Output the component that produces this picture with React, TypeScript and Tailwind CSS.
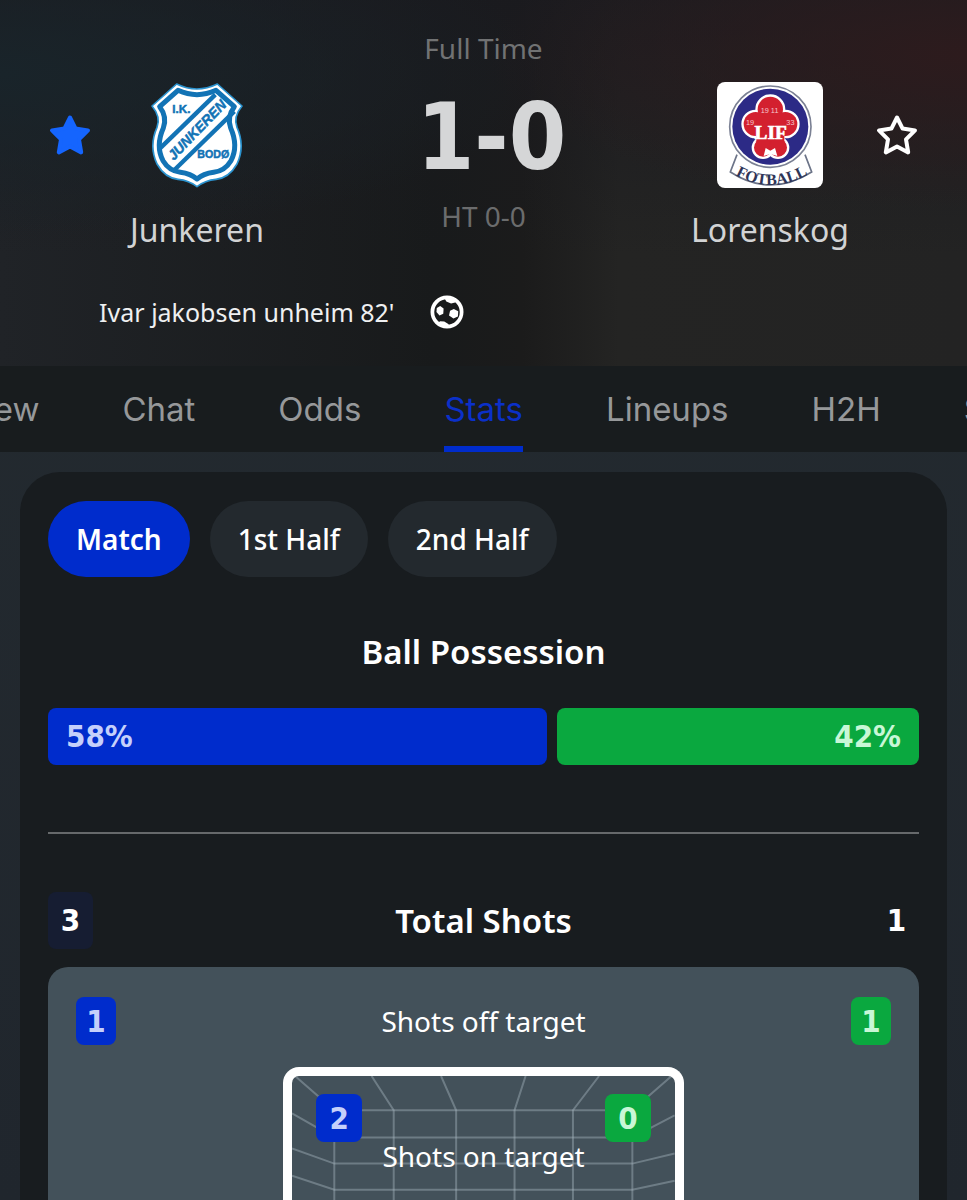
import React, { useState } from 'react';

const TABS = ['Preview', 'Chat', 'Odds', 'Stats', 'Lineups', 'H2H', 'Squad'];
const PERIODS = ['Match', '1st Half', '2nd Half'];

const possession = { home: 58, away: 42 };

const StarIcon = ({ filled }: { filled?: boolean }) => (
  <svg viewBox="0 0 42 42" className="size-[42px]" aria-hidden="true">
    <path
      d="M21 3.5 26.6 14.6 39 16.4 30 25.3 32.2 38.4 21 32.4 9.8 38.4 12 25.3 3 16.4 15.4 14.6Z"
      fill={filled ? '#1565fe' : 'none'}
      stroke={filled ? '#1565fe' : '#ffffff'}
      strokeWidth="4"
      strokeLinejoin="round"
    />
  </svg>
);

const BallIcon = () => (
  <svg viewBox="0 0 100 100" className="size-[34px]" aria-hidden="true">
    <circle cx="50" cy="50" r="43" fill="none" stroke="#fff" strokeWidth="11" />
    <g fill="#fff">
      <path d="M30 32 40 40 39 55 28 60 19 50 20 38Z" />
      <path d="M70 41 83 48 82 63 69 69 56 60 59 46Z" />
      <path d="M42 8 78 14 74 22 62 25 48 19Z" />
      <path d="M22 82 30 77 42 78 55 86 52 94 34 92Z" />
    </g>
  </svg>
);

const JunkerenCrest = () => (
  <svg viewBox="0 12 312 318" className="h-[106px] w-[104px]" role="img" aria-label="Junkeren crest">
    <path
      d="M95 18Q155 48 217 18L291 84Q264 116 276 148Q301 204 276 258Q252 300 213 304Q180 307 156 326Q132 307 99 304Q60 300 36 258Q11 204 36 148Q48 116 21 84Z"
      fill="#fff"
      stroke="#2b93cf"
      strokeWidth="5"
      strokeLinejoin="round"
    />
    <path
      d="M99 37Q156 63 213 37L268 86Q245 116 257 150Q281 204 258 248Q240 278 206 283Q175 287 156 303Q137 287 106 283Q72 278 54 248Q31 204 55 150Q67 116 44 86Z"
      fill="#fff"
      stroke="#1273b5"
      strokeWidth="15"
      strokeLinejoin="round"
    />
    <g stroke="#1273b5" strokeWidth="13">
      <path d="M45 211 211 50" />
      <path d="M88 276 268 100" />
    </g>
    <g fill="#1273b5" stroke="#1273b5" strokeWidth="1.5" fontFamily="'Liberation Sans', sans-serif" fontWeight="700">
      <text x="82" y="106" fontSize="35">I.K.</text>
      <text x="157" y="241" fontSize="32">BODØ</text>
      <text transform="translate(86 249) rotate(-46)" fontSize="42" fontStyle="italic">JUNKEREN</text>
    </g>
  </svg>
);

const LorenskogCrest = () => (
  <svg viewBox="14 14 318 318" className="size-[106px] rounded-lg bg-white" role="img" aria-label="Lorenskog crest">
    <path d="M74 232 54 284Q174 362 298 284L278 232" fill="#fff" stroke="#6c7488" strokeWidth="5" />
    <circle cx="174" cy="148" r="122" fill="#fff" stroke="#7b8194" strokeWidth="5" />
    <circle cx="174" cy="148" r="114" fill="#2c2a86" />
    <g fill="#d3202f" stroke="#fff" strokeWidth="12">
      <circle cx="174" cy="96" r="39" />
      <circle cx="130" cy="140" r="37" />
      <circle cx="219" cy="140" r="37" />
      <circle cx="152" cy="211" r="28" />
      <circle cx="197" cy="211" r="28" />
    </g>
    <g fill="#d3202f">
      <circle cx="174" cy="96" r="38" />
      <circle cx="130" cy="140" r="36" />
      <circle cx="219" cy="140" r="36" />
      <path d="M132 120H216V210H132Z" />
      <circle cx="152" cy="211" r="27" />
      <circle cx="197" cy="211" r="27" />
    </g>
    <path d="M154 236 160 212 174 220 188 212 195 236 174 230Z" fill="#fff" />
    <text
      x="175"
      y="186"
      textAnchor="middle"
      fill="#fff"
      stroke="#fff"
      strokeWidth="2"
      fontFamily="'Liberation Serif', serif"
      fontWeight="700"
      fontSize="58"
    >
      LIF
    </text>
    <g fill="#f3c6cc" fontFamily="'Liberation Sans', sans-serif" fontSize="22">
      <text x="145" y="106">19 11</text>
      <text x="101" y="142">19</text>
      <text x="222" y="142">33</text>
    </g>
    <path id="banner-arc" d="M64 291Q174 356 292 289" fill="none" />
    <text fill="#2f3557" fontFamily="'Liberation Serif', serif" fontWeight="700" fontSize="48">
      <textPath href="#banner-arc" startOffset="50%" textAnchor="middle">FOTBALL</textPath>
    </text>
  </svg>
);

const GoalNet = () => (
  <svg viewBox="0 0 380 240" className="absolute inset-x-0 top-0 w-full" aria-hidden="true">
    <g fill="none" stroke="#a9b8c1" strokeOpacity="0.42" strokeWidth="2">
      <path d="M3 0 42 34V240M79 0 101 34V240M148 0 163 34V240M232 0 221 34V240M305 0 279 34V240M377 0 338 34V240" />
      <path d="M42 34H338" />
      <path d="M0 37 42 61H338L380 39" />
      <path d="M0 72 42 87H338L380 77" />
      <path d="M0 99 42 113H338L380 104" />
      <path d="M0 130 42 139H338L380 132" />
      <path d="M0 160 42 165H338L380 161" />
    </g>
  </svg>
);

interface BadgeProps {
  value: number;
  side: 'home' | 'away';
  wide?: boolean;
}

const Badge: React.FC<BadgeProps> = ({ value, side, wide }) => (
  <span
    className={`flex h-12 items-center justify-center rounded-lg font-['DejaVu_Sans_Condensed','DejaVu_Sans',sans-serif] text-[31px] font-bold ${wide ? 'w-[46px]' : 'w-10'} ${side === 'home' ? 'bg-[#002ccc] text-[#c5d0fb]' : 'bg-[#0aa83f] text-[#c8f7d6]'}`}
  >
    {value}
  </span>
);

interface TeamProps {
  name: string;
  crest: React.ReactNode;
}

const Team: React.FC<TeamProps> = ({ name, crest }) => (
  <div className="flex flex-1 flex-col items-center pt-[82px]">
    {crest}
    <h2 className="mt-[22px] text-[32px] leading-10 text-[#d2d3d4]">{name}</h2>
  </div>
);

export default function App() {
  const [tab, setTab] = useState('Stats');
  const [period, setPeriod] = useState('Match');

  return (
    <div className="flex h-screen flex-col overflow-hidden bg-linear-to-b from-[#242b30] to-[#20262d] font-['Noto_Sans',sans-serif] text-white">
      <header className="shrink-0 bg-[#1a1b1c] bg-[radial-gradient(ellipse_at_100%_15%,#2d1b1d_0%,transparent_35%),radial-gradient(ellipse_at_0%_20%,#19242a_0%,transparent_40%),linear-gradient(to_bottom,rgba(26,26,31,0.8)_0%,transparent_70%),linear-gradient(90deg,#202327_0%,#181a1b_45%,#1b1b1b_54%,#242423_64%,#232323_100%)] pb-[34px]">
        <div className="grid grid-cols-[254px_1fr_254px] px-[49px]">
          <div className="flex items-start">
            <button className="mt-[114px]" aria-label="Unfollow Junkeren">
              <StarIcon filled />
            </button>
            <Team name="Junkeren" crest={<JunkerenCrest />} />
          </div>

          <div className="flex flex-col items-center pt-7">
            <p className="text-[28px] leading-10 text-[#717273]">Full Time</p>
            <p className="pl-4 font-['DejaVu_Sans_Condensed','DejaVu_Sans',sans-serif] text-[92px] leading-[140px] font-bold text-[#d5d6d7]">
              1-0
            </p>
            <p className="text-[28px] leading-4 text-[#6b6c6d]">HT 0-0</p>
          </div>

          <div className="flex items-start">
            <Team name="Lorenskog" crest={<LorenskogCrest />} />
            <button className="mt-[114px]" aria-label="Follow Lorenskog">
              <StarIcon />
            </button>
          </div>
        </div>

        <div className="mt-[42px] flex w-1/2 items-center justify-end gap-[35px] pr-5">
          <p className="text-[25px] leading-10 text-[#eff0f1]">Ivar jakobsen unheim 82'</p>
          <BallIcon />
        </div>
      </header>

      <nav className="flex h-[86px] shrink-0 justify-center gap-[83px] overflow-hidden bg-[#181c1e] pl-3 font-['Inter',sans-serif] text-[33px]">
        {TABS.map(t => (
          <button
            key={t}
            onClick={() => setTab(t)}
            className={`shrink-0 border-b-[6px] pt-2 ${t === tab ? 'border-[#002ccc] text-[#0b30c9]' : 'border-transparent text-[#96989a]'}`}
          >
            {t}
          </button>
        ))}
      </nav>

      <main className="mx-5 mt-5 flex flex-1 flex-col rounded-t-[40px] bg-[#181c1f] px-7 pt-[29px]">
        <div className="flex gap-5">
          {PERIODS.map(p => (
            <button
              key={p}
              onClick={() => setPeriod(p)}
              className={`h-[76px] rounded-full px-7 text-[28px] ${p === period ? 'bg-[#002ccc] font-semibold' : 'bg-[#23292e] font-medium'}`}
            >
              {p}
            </button>
          ))}
        </div>

        <section className="border-b-2 border-[#66696b] pb-[67px]">
          <h3 className="pt-[55px] pb-9 text-center text-[33px] leading-10 font-semibold">Ball Possession</h3>
          <div className="flex gap-2.5 font-['DejaVu_Sans_Condensed','DejaVu_Sans',sans-serif] text-[31px] leading-[57px] font-bold">
            <div className="rounded-lg bg-[#002ccc] text-[#c5d0fb]" style={{ flex: possession.home }}>
              <p className="px-[18px]">{possession.home}%</p>
            </div>
            <div className="rounded-lg bg-[#0aa83f] text-[#c8f7d6]" style={{ flex: possession.away }}>
              <p className="px-[18px] text-right">{possession.away}%</p>
            </div>
          </div>
        </section>

        <section className="flex flex-1 flex-col pt-[58px]">
          <div className="flex items-center justify-between">
            <span className="flex h-[57px] w-[45px] items-center justify-center rounded-lg bg-[#161d32] font-['DejaVu_Sans_Condensed','DejaVu_Sans',sans-serif] text-[31px] font-bold">
              3
            </span>
            <h3 className="text-[33px] leading-10 font-semibold">Total Shots</h3>
            <span className="flex h-[57px] w-[45px] items-center justify-center font-['DejaVu_Sans_Condensed','DejaVu_Sans',sans-serif] text-[31px] font-bold">
              1
            </span>
          </div>

          <div className="mt-[18px] flex flex-1 flex-col items-center rounded-t-[20px] bg-[#43515a] pt-[30px]">
            <div className="flex w-full items-center justify-between px-7">
              <Badge value={1} side="home" />
              <p className="text-[28px]">Shots off target</p>
              <Badge value={1} side="away" />
            </div>

            <div className="relative mt-[22px] h-60 w-[46%] overflow-hidden rounded-t-2xl border-x-[9px] border-t-[9px] border-white">
              <GoalNet />
              <div className="relative flex justify-between px-6 pt-[18px]">
                <Badge value={2} side="home" wide />
                <Badge value={0} side="away" wide />
              </div>
              <p className="relative text-center text-[28px] leading-7">Shots on target</p>
            </div>
          </div>
        </section>
      </main>
    </div>
  );
}
